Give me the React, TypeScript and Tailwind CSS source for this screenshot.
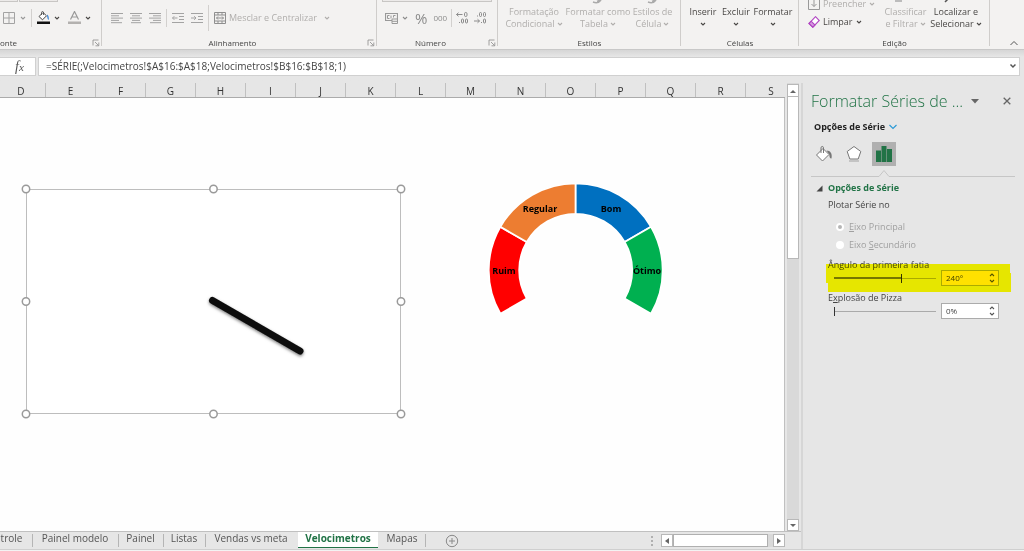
import { useState, type ReactNode } from "react";
import clsx from "clsx";

function Chevron({ className }: { className?: string }) {
  return (
    <svg viewBox="0 0 6 6" className={clsx("inline-block size-1.5 shrink-0", className)}>
      <path d="M1 2l2 2 2-2" fill="none" stroke="currentColor" strokeWidth="1.1" />
    </svg>
  );
}

function Separator({ className }: { className?: string }) {
  return <span className={clsx("h-[18px] w-px shrink-0 bg-[#d2d0ce]", className)} />;
}

function LinesIcon({ rows }: { rows: [number, number][] }) {
  return (
    <svg viewBox="0 0 12 12" className="size-3">
      {rows.map(([x1, x2], i) => (
        <path key={i} d={`M${x1} ${1.5 + i * 2.3}H${x2}`} stroke="#a3a3a3" />
      ))}
    </svg>
  );
}

function IndentIcon({ flip }: { flip?: boolean }) {
  return (
    <svg viewBox="0 0 12 12" className="size-3" fill="none" stroke="#a3a3a3">
      <path d="M0 1.5h12M7 4.5h5M7 7.5h5M0 10.5h12" />
      <path d={flip ? "M0 6h5M3.2 4.2L5 6 3.2 7.8" : "M0.5 6h5M2.3 4.2L0.5 6l1.8 1.8"} />
    </svg>
  );
}

// digits are drawn as small rings, like the office icon does
function DecimalIcon({ increase }: { increase?: boolean }) {
  return (
    <svg viewBox="0 0 13 13" className="size-[13px]" fill="none" stroke="#8c8c8c">
      {increase ? (
        <>
          <path d="M6.5 3.5h-6M2.5 1.7L.5 3.5l2 1.8M3.5 11v1" />
          <rect x="8.5" y="1.5" width="2.5" height="4" rx="1.2" />
          <rect x="5.500" y="8" width="2" height="4" rx="1" />
          <rect x="9.500" y="8" width="2" height="4" rx="1" />
        </>
      ) : (
        <>
          <path d="M0 10h5.500M3.500 8.200l2 1.800-2 1.800M3.500 4.500v1M7.500 11v1" />
          <rect x="5.500" y="1.500" width="2" height="4" rx="1" />
          <rect x="9.500" y="1.500" width="2" height="4" rx="1" />
          <rect x="9.500" y="8" width="2" height="4" rx="1" />
        </>
      )}
    </svg>
  );
}

function Launcher() {
  return (
    <svg viewBox="0 0 8 8" className="size-2" fill="none" stroke="#8a8a8a" strokeWidth="0.8">
      <path d="M1 6.5V1h5.5M3 3l3.5 3.5M6.8 3.5v3.3H3.5" />
    </svg>
  );
}

function Group({
  label,
  className,
  labelClassName = "text-center",
  launcher,
  children,
}: {
  label: string;
  className: string;
  labelClassName?: string;
  launcher?: boolean;
  children: ReactNode;
}) {
  return (
    <section className={clsx("relative flex shrink-0 flex-col", className)}>
      <div className="flex h-[38px] text-[#4a4846]">{children}</div>
      <div className={clsx("text-[8px] leading-[10px] text-[#444]", labelClassName)}>{label}</div>
      {launcher && (
        <button aria-label="Mais opções" className="absolute right-0.5 bottom-0.5 flex">
          <Launcher />
        </button>
      )}
      <span className="absolute top-0 right-0 h-[46px] w-px bg-[#cfcdcb]" />
    </section>
  );
}

function BigButton({
  lines,
  className,
  icon,
  disabled,
}: {
  lines: [string, string];
  className: string;
  icon?: string;
  disabled?: boolean;
}) {
  return (
    <button
      disabled={disabled}
      className={clsx(
        "flex flex-col items-center text-[9px] leading-3 whitespace-nowrap",
        disabled && "text-[#b0aeac]",
        className,
      )}
    >
      <svg viewBox="0 0 24 6" className="h-1.5 w-6">
        {icon && <path d={icon} fill="none" stroke={disabled ? "#aaa" : "#555"} strokeWidth="1.500" />}
      </svg>
      <span>{lines[0]}</span>
      <span className="flex h-3 items-center gap-0.5">
        {lines[1]}
        <Chevron />
      </span>
    </button>
  );
}

const BRUSH = "M7 2c3 1.200 6 .800 8-2M11 1.500l3-1.500";

function Ribbon() {
  return (
    <header className="flex h-[50px] shrink-0 overflow-hidden border-b border-[#c8c8c8] bg-[#f3f2f1]">
      <Group label="onte" launcher className="w-[102px]" labelClassName="text-left">
        <div className="flex flex-col">
          <div className="flex h-0.5 gap-px">
            <span className="w-[18px] border-r border-b border-[#c8c6c4] bg-[#eceae9]" />
            <span className="w-[39px] border border-t-0 border-[#c8c6c4] bg-[#eceae9]" />
          </div>
          <div className="flex h-[31px] items-center pl-[3px]">
            <button aria-label="Bordas" className="flex items-center gap-[5px] text-[#999]">
              <svg viewBox="0 0 12 12" className="size-3" fill="none" stroke="#a3a3a3">
                <path d="M.5.5h11v11H.5zM6 .5v11M.5 6h11" />
              </svg>
              <Chevron />
            </button>
            <Separator className="mx-[5px]" />
            <button aria-label="Cor de preenchimento" className="flex items-center gap-1">
              <svg viewBox="0 0 13 13" className="size-[13px]" fill="none">
                <path d="M6 1.500L2 5.500l3.500 3.300 4-4z" fill="#fff" stroke="#444" />
                <path d="M4.500 4V1.500c0-1.300 2-1.300 2 0V4" stroke="#444" strokeWidth="0.800" />
                <path d="M10 3.500c1.500.800 2 3 1.700 5.500-1-.5-1.400-2-1.700-5.500z" fill="#2b7cd3" />
                <path d="M0 10.500h13v2.500H0z" fill="#111" />
              </svg>
              <Chevron />
            </button>
            <button aria-label="Cor da fonte" className="ml-2 flex items-center gap-1">
              <svg viewBox="0 0 13 13" className="size-[13px]" fill="none">
                <path d="M2.500 8.500L6.500.500l4 8M4 6h5" stroke="#999" strokeWidth="1.200" />
                <path d="M0 10.500h13v2.500H0z" fill="#b3b1af" />
              </svg>
              <Chevron />
            </button>
          </div>
        </div>
      </Group>

      <Group label="Alinhamento" launcher className="w-[275px]" labelClassName="pr-[14px] text-center">
        <div className="flex h-[33px] items-center pt-0.5 pl-[9px] text-[#b0aeac]">
          <div className="flex gap-[7px]">
            <button aria-label="Alinhar à esquerda">
              <LinesIcon rows={[[0, 12], [0, 8], [0, 12], [0, 8], [0, 11]]} />
            </button>
            <button aria-label="Centralizar">
              <LinesIcon rows={[[0, 12], [2, 10], [0, 12], [2, 10], [1, 11]]} />
            </button>
            <button aria-label="Alinhar à direita">
              <LinesIcon rows={[[0, 12], [4, 12], [0, 12], [4, 12], [1, 12]]} />
            </button>
          </div>
          <Separator className="mx-[5px]" />
          <div className="flex gap-[7px]">
            <button aria-label="Diminuir recuo"><IndentIcon /></button>
            <button aria-label="Aumentar recuo"><IndentIcon flip /></button>
          </div>
          <Separator className="mx-[5px] h-[26px]" />
          <button disabled className="flex items-center gap-[3px] text-[9px]">
            <svg viewBox="0 0 12 12" className="size-3" fill="none" stroke="#8f8f8f">
              <path d="M.500.500h11v11H.500zM.500 3h11M.500 9h11M4 .500V3M8 .500V3M4 9v2.500M8 9v2.500M2.500 6h7M4 4.500L2.500 6 4 7.500M8 4.500L9.500 6 8 7.500" />
            </svg>
            Mesclar e Centralizar
            <Chevron className="ml-1" />
          </button>
        </div>
      </Group>

      <Group label="Número" launcher className="w-[121px]" labelClassName="pr-[14px] text-center">
        <div className="flex flex-col text-[#8c8c8c]">
          <div className="ml-[5px] h-0.5 w-[110px] border border-t-0 border-[#c8c6c4] bg-[#eceae9]" />
          <div className="flex h-[31px] items-center pl-2">
            <button aria-label="Formato de contabilização" className="flex items-center gap-1">
              <svg viewBox="0 0 13 12" className="h-3 w-[13px]" fill="none" stroke="#999">
                <path d="M.500 1.500h12v7H.500z" strokeWidth="1.200" />
                <path d="M4.500 3.500h-2v3h2M6 3.500v3M10.500 3.500h-2v2" />
                <path d="M7 7h5.500v4.500H7zM7 9.300h5.500" fill="#f3f2f1" />
              </svg>
              <Chevron />
            </button>
            <button className="ml-[7px] text-[15px] leading-4">%</button>
            <button className="ml-[6px] text-[8px]">000</button>
            <Separator className="mx-[4px]" />
            <button aria-label="Aumentar casas decimais"><DecimalIcon increase /></button>
            <button aria-label="Diminuir casas decimais" className="ml-[5px]"><DecimalIcon /></button>
          </div>
        </div>
      </Group>

      <Group label="Estilos" className="w-[183px]">
        <BigButton disabled lines={["Formatação", "Condicional"]} className="ml-1 w-16" />
        <BigButton disabled icon={BRUSH} lines={["Formatar como", "Tabela"]} className="w-16" />
        <BigButton disabled icon={BRUSH} lines={["Estilos de", "Célula"]} className="w-[45px]" />
      </Group>

      <Group label="Células" className="w-[118px]">
        <BigButton lines={["Inserir", ""]} className="ml-1.5 w-8" />
        <BigButton lines={["Excluir", ""]} className="w-[34px]" />
        <BigButton lines={["Formatar", ""]} className="w-10" />
      </Group>

      <Group label="Edição" className="w-[191px]">
        <div className="-mt-[5px] flex w-[82px] flex-col pl-[9px] text-[9px]">
          <button disabled className="flex h-[18px] items-center gap-[3px] leading-3 text-[#b0aeac]">
            <svg viewBox="0 0 12 12" className="size-3" fill="none" stroke="#999">
              <path d="M.500.500h11v11H.500zM6 2v6.500M3.500 6L6 8.500 8.500 6" />
            </svg>
            Preencher
            <Chevron />
          </button>
          <button className="flex h-[18px] items-center gap-[3px]">
            <svg viewBox="0 0 12 12" className="size-3" fill="none" stroke="#b146c2" strokeWidth="1.100">
              <path d="M7.500.700L11.300 4.500 4.800 11.200 1 7.500z" fill="#fff" />
              <path d="M1 7.500l2.200-2.300L7 9l-2.200 2.200z" fill="#d59be0" />
            </svg>
            Limpar
            <Chevron />
          </button>
        </div>
        <BigButton disabled icon="M1 1h7" lines={["Classificar", "e Filtrar"]} className="w-[49px]" />
        <BigButton icon="M1 2l3-3" lines={["Localizar e", "Selecionar"]} className="w-[52px]" />
      </Group>

      <button aria-label="Recolher a faixa de opções" className="mr-1.5 ml-auto self-end pb-[3px] text-[#555]">
        <svg viewBox="0 0 8 6" className="h-1.5 w-2">
          <path d="M.500 5L4 1.500 7.500 5" fill="none" stroke="currentColor" />
        </svg>
      </button>
    </header>
  );
}

function FormulaBar() {
  return (
    <div className="flex h-[33px] shrink-0 items-start gap-0.5 bg-linear-to-b from-[#d6d6d6] to-[#e6e6e6] to-20% pt-[7px] pr-1">
      <button
        aria-label="Inserir função"
        className="h-[19px] w-9 border-y border-r border-[#d0d0d0] bg-white pl-1 font-['Liberation_Serif',serif] text-[14px] leading-4 text-[#555] italic"
      >
        f<span className="text-[11px]">x</span>
      </button>
      <div className="flex h-[19px] flex-1 items-start border border-[#d0d0d0] bg-white pr-0.5 pl-[7px]">
        <input
          aria-label="Barra de fórmulas"
          defaultValue="=SÉRIE(;Velocimetros!$A$16:$A$18;Velocimetros!$B$16:$B$18;1)"
          className="h-4 w-full text-[10px] leading-4 text-[#444] outline-none"
        />
        <svg viewBox="0 0 8 8" className="mt-1 size-2">
          <path d="M1.500 2.500L4 5l2.500-2.500" fill="none" stroke="#555" strokeWidth="1.500" />
        </svg>
      </div>
    </div>
  );
}

const COLUMNS = "EFGHIJKLMNOPQR".split("");

function ColumnHeaders() {
  return (
    <div className="flex h-[15px] shrink-0 overflow-hidden border-b border-[#ababab] text-center text-[10px] leading-4 text-[#333]">
      <div className="w-[46px] shrink-0 border-r border-[#c0c0c0] pr-[3px]">D</div>
      {COLUMNS.map((c) => (
        <div key={c} className="w-[50px] shrink-0 border-r border-[#c0c0c0]">
          {c}
        </div>
      ))}
      <div className="w-[50px] shrink-0">S</div>
    </div>
  );
}

const HANDLES = [
  [5, 5], [192.5, 5], [380, 5],
  [5, 117.5], [380, 117.5],
  [5, 230], [192.5, 230], [380, 230],
];

function NeedleChart() {
  return (
    <svg viewBox="0 0 385 235" className="absolute top-[86px] left-[21px] h-[235px] w-[385px]">
      <defs>
        <filter id="needle-shadow" x="-20%" y="-20%" width="140%" height="150%">
          <feDropShadow dx="0" dy="1.5" stdDeviation="1.500" floodOpacity="0.500" />
        </filter>
      </defs>
      <path d="M5.500 5.500h374v224H5.500z" fill="#fff" stroke="#bdbdbd" />
      {HANDLES.map(([x, y]) => (
        <circle key={`${x}-${y}`} cx={x} cy={y} r="3.700" fill="#fff" stroke="#9a9a9a" strokeWidth="1.500" />
      ))}
      <path
        d="M191.500 116.500L279 167"
        stroke="#0d0d0d"
        strokeWidth="7"
        strokeLinecap="round"
        filter="url(#needle-shadow)"
      />
    </svg>
  );
}

const SLICES = [
  { label: "Ruim", from: -120, color: "#ff0000", x: 17, y: 93 },
  { label: "Regular", from: -60, color: "#ed7d31", x: 53, y: 31 },
  { label: "Bom", from: 0, color: "#0070c0", x: 124, y: 31 },
  { label: "Ótimo", from: 60, color: "#00b050", x: 160, y: 93 },
];

function slicePath(from: number) {
  const point = (r: number, deg: number) => {
    const a = (deg * Math.PI) / 180;
    return `${(88.7 + r * Math.sin(a)).toFixed(2)} ${(89.3 - r * Math.cos(a)).toFixed(2)}`;
  };
  const to = from + 60;
  return `M${point(87, from)}A87 87 0 0 1 ${point(87, to)}L${point(56.5, to)}A56.500 56.500 0 0 0 ${point(56.5, from)}Z`;
}

function GaugeChart() {
  return (
    <svg viewBox="0 0 178 140" className="absolute top-[83px] left-[487px] h-[140px] w-[178px]">
      {SLICES.map((s) => (
        <path key={s.label} d={slicePath(s.from)} fill={s.color} stroke="#fff" strokeWidth="1.800" />
      ))}
      {SLICES.map((s) => (
        <text key={s.label} x={s.x} y={s.y} textAnchor="middle" className="text-[9px] font-bold">
          {s.label}
        </text>
      ))}
    </svg>
  );
}

function ArrowButton({ label, d, className }: { label: string; d: string; className?: string }) {
  return (
    <button
      aria-label={label}
      className={clsx("flex shrink-0 items-center justify-center border border-[#b8b8b8] bg-white", className)}
    >
      <svg viewBox="0 0 6 6" className="size-1.5">
        <path d={d} fill="#666" />
      </svg>
    </button>
  );
}

const TABS = [
  { name: "trole", width: "w-[33px] pr-2.5" },
  { name: "Painel modelo", width: "w-[86px] pr-0.5" },
  { name: "Painel", width: "w-[45px] pr-0.5" },
  { name: "Listas", width: "w-[42px] pr-0.5" },
  { name: "Vendas vs meta", width: "w-[92px] pr-0.5" },
  { name: "Velocimetros", width: "w-[80px]" },
  { name: "Mapas", width: "w-[48px]" },
];

function SheetTabs() {
  const [active, setActive] = useState("Velocimetros");
  return (
    <div className="flex h-[18px] shrink-0 border-t border-[#c0c0c0] pr-4 text-[10px] whitespace-nowrap text-[#555]">
      {TABS.map((t, i) => (
        <button
          key={t.name}
          onClick={() => setActive(t.name)}
          className={clsx(
            "flex h-4 shrink-0 items-start justify-center leading-[13px]",
            t.width,
            t.name === active && "border-b border-[#217346] bg-white font-bold text-[#217346]",
            t.name !== active &&
              TABS[i + 1]?.name !== active &&
              "bg-linear-to-b from-[#b5b5b5] to-[#b5b5b5] bg-[length:1px_13px] bg-right bg-no-repeat",
          )}
        >
          {t.name}
        </button>
      ))}
      <button aria-label="Nova planilha" className="ml-[19px]">
        <svg viewBox="0 0 14 14" className="size-3.5" fill="none" stroke="#8a8a8a">
          <circle cx="7" cy="7" r="5.700" />
          <path d="M4 7h6M7 4v6" />
        </svg>
      </button>
      <div className="mt-0.5 ml-auto flex h-[13px]">
        <svg viewBox="0 0 2 13" className="mr-2 h-[13px] w-0.5" fill="#b0b0b0">
          <path d="M0 2h2v2H0zM0 6h2v2H0zM0 10h2v2H0z" />
        </svg>
        <ArrowButton label="Rolar para a esquerda" d="M5 0v6L1 3z" className="w-3" />
        <div className="flex w-[100px] bg-[#d9d9d9]">
          <div className="w-[95px] border border-[#b0b0b0] bg-white" />
        </div>
        <ArrowButton label="Rolar para a direita" d="M1 0v6l4-3z" className="w-3" />
      </div>
    </div>
  );
}

function Worksheet() {
  return (
    <main className="flex min-w-0 flex-1 flex-col">
      <div className="flex min-h-0 flex-1 gap-0.5 pr-0.5">
        <div className="flex min-w-0 flex-1 flex-col">
          <ColumnHeaders />
          <div className="relative flex-1 border-r border-[#c0c0c0] bg-[#fefefe]">
            <NeedleChart />
            <GaugeChart />
          </div>
        </div>
        <div className="flex w-3 flex-col bg-[#d9d9d9] pt-px">
          <ArrowButton label="Rolar para cima" d="M0 5h6L3 2z" className="h-[13px]" />
          <div className="h-[162px] border border-t-0 border-[#b8b8b8] bg-white" />
          <ArrowButton label="Rolar para baixo" d="M0 2h6L3 5z" className="mt-auto h-3" />
        </div>
      </div>
      <SheetTabs />
    </main>
  );
}

function SliderField({
  id,
  label,
  max,
  initial,
  suffix,
  highlighted,
}: {
  id: string;
  label: ReactNode;
  max: number;
  initial: number;
  suffix: string;
  highlighted?: boolean;
}) {
  const [value, setValue] = useState(initial);
  const change = (n: number) => setValue(Math.max(0, Math.min(max, n)));

  return (
    <div className="relative mt-[7px] pl-[25px]">
      <label htmlFor={id} className="block leading-[10px]">
        {label}
      </label>
      <div className="flex h-4 items-center pl-1.5">
        <input
          id={id}
          type="range"
          min={0}
          max={max}
          value={value}
          onChange={(e) => change(Number(e.target.value))}
          style={{ backgroundSize: `${(value / max) * 100}% 2px, 100% 1px` }}
          className="h-[9px] w-[102px] appearance-none bg-[linear-gradient(#777,#777),linear-gradient(#aaa,#aaa)] bg-left bg-no-repeat [&::-webkit-slider-thumb]:h-[9px] [&::-webkit-slider-thumb]:w-px [&::-webkit-slider-thumb]:appearance-none [&::-webkit-slider-thumb]:bg-[#333]"
        />
        <div
          className={clsx(
            "ml-[5px] flex h-4 w-[58px] border border-[#ababab]",
            highlighted ? "bg-[#ffe100]" : "bg-white",
          )}
        >
          <input
            aria-label="Valor"
            value={`${value}${suffix}`}
            onChange={(e) => change(parseInt(e.target.value) || 0)}
            className="w-full min-w-0 pl-1 text-[8px] text-[#444] outline-none"
          />
          <div className="flex w-[9px] shrink-0 flex-col justify-between py-px text-[#555]">
            <button aria-label="Aumentar" onClick={() => change(value + 1)} className="flex">
              <Chevron className="rotate-180" />
            </button>
            <button aria-label="Diminuir" onClick={() => change(value - 1)} className="flex">
              <Chevron />
            </button>
          </div>
        </div>
      </div>
      {highlighted && (
        <svg
          viewBox="0 0 186 28"
          className="pointer-events-none absolute top-1 left-[23px] h-7 w-[186px] mix-blend-multiply"
        >
          <path d="M0 0h184v9h1v19H2v-9H0z" fill="#ffff00" />
        </svg>
      )}
    </div>
  );
}

function FormatPane() {
  const [axis, setAxis] = useState("principal");
  return (
    <aside className="flex w-[223px] shrink-0 flex-col border-l-2 border-[#d6d6d6] pt-1.5 text-[9px] leading-4 text-[#444]">
      <div className="flex h-6 items-center pr-[13px] pl-2 text-[#217346]">
        <h2 className="text-[16px] font-light whitespace-nowrap">Formatar Séries de ...</h2>
        <button aria-label="Opções do painel" className="ml-auto">
          <svg viewBox="0 0 8 5" className="h-[5px] w-2">
            <path d="M0 0h8L4 4.500z" fill="#666" />
          </svg>
        </button>
        <button aria-label="Fechar" className="ml-6">
          <svg viewBox="0 0 8 8" className="size-2">
            <path d="M.700.700l6.600 6.600M7.300.700L.700 7.300" stroke="#666" strokeWidth="1.300" />
          </svg>
        </button>
      </div>

      <button className="mt-1.5 ml-[11px] flex items-center gap-1 self-start font-bold text-[#222]">
        Opções de Série
        <svg viewBox="0 0 8 6" className="h-1.5 w-2">
          <path d="M.500 1L4 4.500 7.500 1" fill="none" stroke="#2e9bd6" strokeWidth="1.200" />
        </svg>
      </button>

      <div className="mt-[7px] ml-[9px] flex gap-1.5">
        <button aria-label="Preenchimento e linha" className="flex size-6 items-center justify-center">
          <svg viewBox="0 0 18 18" className="size-[18px]" fill="none">
            <path d="M8 3.500L1.500 10l6 6 6.500-6.500z" fill="#fff" stroke="#777" />
            <path d="M6 8V2.800c0-1.800 2.500-1.800 2.500 0V8" stroke="#777" />
            <path d="M11.500 5.500c4 0 6 3 5 8-2 0-2-2-2.200-4z" fill="#777" />
          </svg>
        </button>
        <button aria-label="Efeitos" className="flex size-6 items-center justify-center">
          <svg viewBox="0 0 18 18" className="size-[18px]" fill="none">
            <path d="M9 1.500l6.800 5-2.600 7.500H4.800L2.200 6.500z" fill="#fff" stroke="#777" />
            <path d="M4 16h10" stroke="#c4c4c4" strokeWidth="2" />
          </svg>
        </button>
        <button aria-label="Opções de série" className="flex size-6 items-center justify-center bg-[#b0b0b0]">
          <svg viewBox="0 0 18 18" className="size-[18px]" fill="#217346">
            <path d="M1 5.500h5V17H1zM6.500 1h5v16h-5zM12 4h5v13h-5z" />
          </svg>
        </button>
      </div>
      <svg viewBox="0 0 204 11" className="ml-2 h-[11px] w-[204px]">
        <path d="M0 10.500h68l5-6 5 6h126" fill="none" stroke="#c6c6c6" />
      </svg>

      <h3 className="mt-[3px] flex items-center gap-[5px] pl-[13px] font-bold text-[#217346]">
        <svg viewBox="0 0 7 7" className="size-[7px]">
          <path d="M6.500.500v6h-6z" fill="#444" />
        </svg>
        Opções de Série
      </h3>
      <fieldset className="pl-[25px]">
        <legend className="pt-px">Plotar Série no</legend>
        <div className="mt-1.5 flex flex-col gap-0.5 pl-2 text-[#a0a0a0]">
          <label className="flex items-center gap-[5px]">
            <input
              type="radio"
              name="eixo"
              checked={axis === "principal"}
              onChange={() => setAxis("principal")}
              className="size-2 appearance-none rounded-full border-2 border-white bg-white checked:bg-[#b5b5b5]"
            />
            <span><u>E</u>ixo Principal</span>
          </label>
          <label className="flex items-center gap-[5px]">
            <input
              type="radio"
              name="eixo"
              checked={axis === "secundario"}
              onChange={() => setAxis("secundario")}
              className="size-2 appearance-none rounded-full border-2 border-white bg-white checked:bg-[#b5b5b5]"
            />
            <span>Eixo <u>S</u>ecundário</span>
          </label>
        </div>
      </fieldset>
      <SliderField
        id="angulo"
        label={<>Ân<u>g</u>ulo da primeira fatia</>}
        max={360}
        initial={240}
        suffix="°"
        highlighted
      />
      <SliderField id="explosao" label={<>E<u>x</u>plosão de Pizza</>} max={400} initial={0} suffix="%" />
    </aside>
  );
}

export default function App() {
  return (
    <div className="flex h-screen flex-col overflow-hidden bg-[#e6e6e6] font-['Open_Sans','Noto_Sans',sans-serif]">
      <Ribbon />
      <FormulaBar />
      <div className="flex min-h-0 flex-1">
        <Worksheet />
        <FormatPane />
      </div>
      <footer className="h-0.5 shrink-0 border-t border-[#cfcfcf] bg-[#f3f3f3]" />
    </div>
  );
}
